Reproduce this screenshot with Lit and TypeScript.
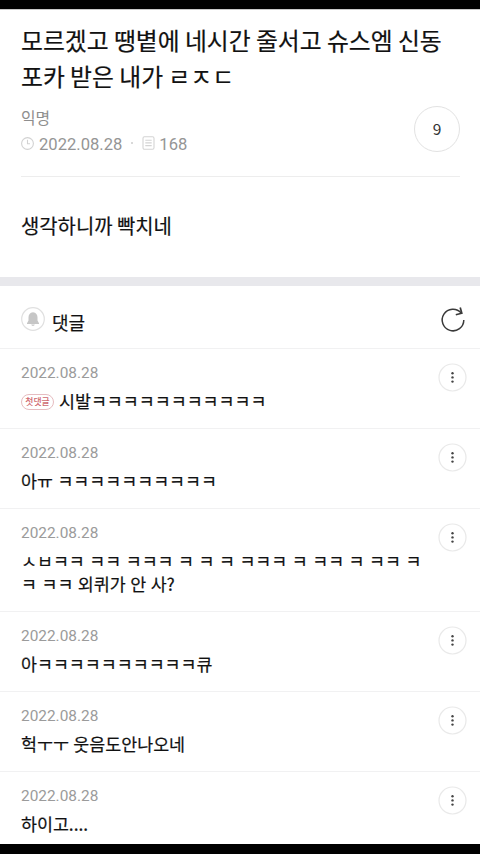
import { LitElement, html, css, svg } from "lit";
import { customElement, property } from "lit/decorators.js";

interface Comment {
  date: string;
  lines: string[];
  first?: boolean;
}

const DATE = "2022.08.28";

const comments: Comment[] = [
  { date: DATE, lines: ["시발ㅋㅋㅋㅋㅋㅋㅋㅋㅋㅋㅋ"], first: true },
  { date: DATE, lines: ["아ㅠ ㅋㅋㅋㅋㅋㅋㅋㅋㅋㅋ"] },
  {
    date: DATE,
    lines: [
      "ㅅㅂㅋㅋ ㅋㅋ ㅋㅋㅋ ㅋ ㅋ ㅋ ㅋㅋㅋ ㅋ ㅋㅋ ㅋ ㅋㅋ ㅋ",
      "ㅋ ㅋㅋ 외퀴가 안 사?",
    ],
  },
  { date: DATE, lines: ["아ㅋㅋㅋㅋㅋㅋㅋㅋㅋㅋ큐"] },
  { date: DATE, lines: ["헉ㅜㅜ 웃음도안나오네"] },
  { date: DATE, lines: ["하이고...."] },
];

@customElement("comment-row")
class CommentRow extends LitElement {
  @property({ attribute: false }) item!: Comment;

  static styles = css`
    :host {
      display: flex;
      box-sizing: border-box;
      flex: none;
      justify-content: space-between;
      align-items: flex-start;
      padding: 14px 13px 16px 21px;
      border-bottom: 1px solid #f1f1f2;
    }
    .date {
      font: 15.4px/20px Roboto, sans-serif;
      color: #9b9b9b;
    }
    .text {
      margin-top: 6px;
      font-size: 17.35px;
      word-spacing: 0.6px;
      line-height: 23px;
      color: #111;
      -webkit-text-stroke: 0.2px #111;
    }
    .line {
      display: flex;
      align-items: center;
      height: 23px;
      white-space: pre;
    }
    .badge {
      box-sizing: border-box;
      width: 33px;
      height: 16px;
      margin: 3px 5px 0 0;
      border: 1px solid #e6bcc0;
      border-radius: 8px;
      font-size: 8.8px;
      line-height: 13px;
      font-weight: 500;
      text-align: center;
      color: #cf6a70;
      -webkit-text-stroke: 0;
    }
    .more {
      flex: none;
      width: 29px;
      height: 29px;
    }
  `;

  render() {
    return html`
      <div>
        <div class="date">${this.item.date}</div>
        <div class="text">
          ${this.item.lines.map(
            (l, i) => html`<div class="line">${this.item.first && i === 0
              ? html`<span class="badge">첫댓글</span>`
              : ""}<span>${l}</span></div>`
          )}
        </div>
      </div>
      <svg class="more" viewBox="0 0 29 29">
        <circle cx="14.5" cy="14.5" r="13.5" fill="none" stroke="#e9e9e9" stroke-width="1.2" />
        ${[10.2, 14.4, 18.6].map(
          (y) => svg`<circle cx="14.5" cy=${y} r="1.2" fill="#444" />`
        )}
      </svg>
    `;
  }
}

@customElement("app-root")
class AppRoot extends LitElement {
  static styles = css`
    :host {
      display: flex;
      flex-direction: column;
      box-sizing: border-box;
      height: 854px;
      overflow: hidden;
      border-top: 9px solid #000;
      border-bottom: 10px solid #000;
      background: #fff;
      font-family: "Noto Sans CJK KR", sans-serif;
      color: #111;
    }
    .post {
      flex: none;
      box-sizing: border-box;
      height: 268px;
      padding: 12px 20px 0 21px;
      border-top: 1px solid #c8c8c8;
    }
    .title {
      margin: 0;
      font-size: 23.8px;
      line-height: 36px;
      font-weight: 400;
      white-space: pre;
      -webkit-text-stroke: 0.2px #111;
    }
    .info {
      display: flex;
      justify-content: space-between;
      box-sizing: border-box;
      height: 83px;
      border-bottom: 1px solid #ededed;
    }
    .author {
      margin-top: 12px;
      font-size: 15.9px;
      line-height: 24px;
      color: #8e8e8e;
    }
    .meta {
      display: flex;
      align-items: center;
      margin-top: 5px;
      height: 20px;
      font: 16.6px/20px Roboto, sans-serif;
      color: #959595;
    }
    .clock {
      width: 13px;
      height: 13px;
      margin: -4px 5px 0 0;
    }
    .dot {
      width: 2px;
      height: 2px;
      margin: -5px 9px 0 9px;
      background: #ccc;
      border-radius: 1px;
    }
    .doc {
      width: 13px;
      height: 14px;
      margin: -4px 4px 0 0;
    }
    .count {
      box-sizing: border-box;
      width: 46px;
      height: 46px;
      margin-top: 12px;
      border: 1px solid #e2e2e2;
      border-radius: 50%;
      font-size: 15.5px;
      line-height: 43px;
      text-align: center;
      color: #333;
    }
    .body {
      margin-top: 34px;
      font-size: 19.9px;
      line-height: 29px;
      -webkit-text-stroke: 0.2px #111;
    }
    .band {
      flex: none;
      height: 9px;
      background: #e8e8ec;
    }
    .head {
      flex: none;
      display: flex;
      align-items: center;
      box-sizing: border-box;
      height: 63px;
      padding: 0 13px 0 21px;
      border-bottom: 1px solid #f1f1f2;
    }
    .bell {
      width: 24px;
      height: 24px;
      margin: 4px 7px 0 0;
    }
    .label {
      flex: 1;
      margin-top: 10px;
      font-size: 18px;
      line-height: 26px;
      -webkit-text-stroke: 0.2px #111;
    }
    .reload {
      width: 28px;
      height: 28px;
      margin-top: 5px;
    }
  `;

  render() {
    return html`
      <section class="post">
        <h1 class="title">모르겠고 땡볕에 네시간 줄서고 슈스엠 신동<br />포카 받은 내가 ㄹㅈㄷ</h1>
        <div class="info">
          <div>
            <div class="author">익명</div>
            <div class="meta">
              <svg class="clock" viewBox="0 0 13 13" fill="none" stroke="#d2d2d2" stroke-width="1.1">
                <circle cx="6.5" cy="6.5" r="5.9" />
                <path d="M6.5 2.8V6.8H9" />
              </svg>
              <span>${DATE}</span>
              <span class="dot"></span>
              <svg class="doc" viewBox="0 0 13 14" fill="none" stroke="#d4d4d4" stroke-width="1.1">
                <rect x="1" y="0.8" width="11" height="12.4" rx="1.4" />
                <path d="M3.3 4.2H9.7M3.3 6.9H9.7M3.3 9.6H9.7" />
              </svg>
              <span>168</span>
            </div>
          </div>
          <div class="count">9</div>
        </div>
        <div class="body">생각하니까 빡치네</div>
      </section>
      <div class="band"></div>
      <header class="head">
        <svg class="bell" viewBox="0 0 24 24">
          <circle cx="12" cy="12" r="11.3" fill="none" stroke="#e0e0e0" stroke-width="1.2" />
          <path
            d="M12 5.2C8.9 5.5 7.5 7.6 7.5 10.2V13.6L6 16.2V17H18V16.2L16.5 13.6V10.2C16.5 7.6 15.1 5.5 12 5.2ZM10.2 17.6C10.5 19.3 13.5 19.3 13.8 17.6Z"
            fill="#c6c6c6"
          />
        </svg>
        <span class="label">댓글</span>
        <svg class="reload" viewBox="0 0 28 28" fill="none" stroke="#3a3a3a" stroke-width="1.5">
          <path d="M24.8 14A10.8 10.8 0 1 1 22.2 7" />
          <path d="M21.2 1.5L22.8 7.2L16.8 8.8" stroke-width="1.7" />
        </svg>
      </header>
      ${comments.map((c) => html`<comment-row .item=${c}></comment-row>`)}
    `;
  }
}
